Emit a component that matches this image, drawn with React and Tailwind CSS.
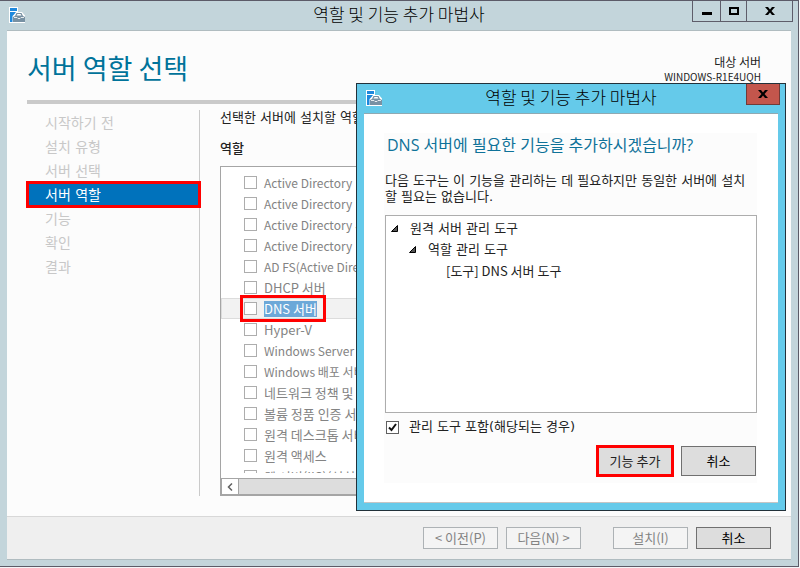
import clsx from 'clsx';

const steps = ['시작하기 전', '설치 유형', '서버 선택', '서버 역할', '기능', '확인', '결과'];

const roles = [
  { name: 'Active Directory', latin: true },
  { name: 'Active Directory', latin: true },
  { name: 'Active Directory 서비스', latin: true },
  { name: 'Active Directory', latin: true },
  { name: 'AD FS(Active Directory)', latin: true },
  { name: 'DHCP 서버' },
  { name: 'DNS 서버', selected: true },
  { name: 'Hyper-V' },
  { name: 'Windows Server', latin: true },
  { name: 'Windows 배포 서비스', latin: true },
  { name: '네트워크 정책 및 액세스 서비스' },
  { name: '볼륨 정품 인증 서비스' },
  { name: '원격 데스크톱 서비스' },
  { name: '원격 액세스' },
  { name: '웹 서버(IIS)(설치됨)' },
];

function ServerIcon() {
  return (
    <svg width="17" height="17" viewBox="0 0 17 17" aria-hidden="true">
      <path d="M0 0h9v5h4l3 3.500V16H0z" fill="#fff" />
      <path d="M1 1h7v3H1zM1 5h6L5 7.500 3.500 9v6H1z" fill="#1e88dc" />
      <path d="M4 15V10l2-1 1.500-3h5L14 9l2 1v5z" fill="#7891a3" />
      <path d="M7.500 8.500 8.500 7h3l1 1.500z" fill="#fff" />
      <path d="M5 10.500h3l1 1h2l1-1h3" fill="none" stroke="#fff" strokeWidth="0.800" />
    </svg>
  );
}

function CloseGlyph() {
  return (
    <svg width="10" height="8" viewBox="0 0 10 8" aria-hidden="true">
      <path d="M0 0h3l2 2.500L7 0h3L6.500 4 10 8H7L5 5.500 3 8H0l3.500-4z" fill="#000" />
    </svg>
  );
}

function Button({ children, disabled, className }) {
  return (
    <button
      type="button"
      disabled={disabled}
      className={clsx(
        'flex w-[75px] items-center justify-center border text-[13px] leading-4 whitespace-nowrap',
        disabled ? 'border-[#adb2b5] bg-[#f4f4f4] text-[#838383]' : 'border-[#707070] bg-[#ddd] text-black',
        className,
      )}
    >
      {children}
    </button>
  );
}

function WindowControls() {
  return (
    <div className="absolute top-0 right-[5px] flex h-[21px] divide-x divide-[#5e5d6a] border border-t-0 border-[#5e5d6a]">
      <button type="button" aria-label="최소화" className="flex w-7 items-center justify-center">
        <span className="mt-1 h-[3px] w-[10px] bg-black" />
      </button>
      <button type="button" aria-label="최대화" className="flex w-[26px] items-center justify-center">
        <span className="h-2 w-[10px] border-2 border-black" />
      </button>
      <button type="button" aria-label="닫기" className="flex w-[45px] items-center justify-center">
        <CloseGlyph />
      </button>
    </div>
  );
}

function StepNav() {
  return (
    <nav className="w-[171px] shrink-0 border-r border-[#cacaca] pt-[2px] font-['DejaVu_Sans','Noto_Sans_CJK_KR',sans-serif]">
      <ul className="flex flex-col gap-[3px] pr-px">
        {steps.map((step) => (
          <li key={step}>
            <a
              href="#"
              className={clsx(
                'flex h-[21px] items-center pl-4 text-sm',
                step === '서버 역할'
                  ? 'relative bg-[#0072bc] text-white outline-3 outline-[#f00]'
                  : 'text-[#c8c8c8]',
              )}
            >
              {step}
            </a>
          </li>
        ))}
      </ul>
    </nav>
  );
}

function RoleRow({ name, latin, selected }) {
  return (
    <li
      className={clsx(
        'flex h-[21px] shrink-0 items-center pl-[22px]',
        selected && 'bg-[#f2f2f2] outline -outline-offset-1 outline-[#dcdcdc]',
      )}
    >
      <label
        className={clsx(
          'flex h-[21px] items-center gap-[7px] pr-[6px] pl-px leading-4 whitespace-nowrap text-[#838383]',
          latin ? 'text-xs' : 'text-[13px]',
          selected && 'relative outline-3 outline-[#f00]',
        )}
      >
        <input type="checkbox" disabled className="size-[13px] appearance-none border border-[#adadad] bg-white" />
        <span className={clsx(selected && 'bg-[#6ca8d8] text-white')}>{name}</span>
      </label>
    </li>
  );
}

function RoleList() {
  return (
    <div className="flex min-h-0 flex-1 flex-col border border-[#a5a5a5] bg-white">
      <ul className="mb-[5px] flex min-h-0 flex-1 flex-col overflow-hidden pt-[5px]">
        {roles.map((role, i) => (
          <RoleRow key={i} {...role} />
        ))}
      </ul>
      <div className="flex h-[17px] border border-[#a5a5a5]">
        <button type="button" aria-label="왼쪽으로 스크롤" className="flex w-4 items-center justify-center">
          <svg width="6" height="8" viewBox="0 0 6 8" aria-hidden="true">
            <path d="M5 0.500 1.500 4 5 7.500" fill="none" stroke="#606060" strokeWidth="1.500" />
          </svg>
        </button>
        <div className="flex-1 border-l border-[#a5a5a5] bg-[#ddd]" />
      </div>
    </div>
  );
}

function TreeItem({ label, className, leaf }) {
  return (
    <li className={clsx('flex h-[21px] items-center gap-3 text-[13px]', className)}>
      {!leaf && (
        <svg width="7" height="7" viewBox="0 0 7 7" aria-hidden="true">
          <path d="M6.500 0.500v6h-6z" fill="#555" stroke="#000" />
        </svg>
      )}
      <span className={clsx(!leaf && "font-['DejaVu_Sans','Noto_Sans_CJK_KR',sans-serif]")}>{label}</span>
    </li>
  );
}

function AddFeaturesDialog() {
  return (
    <div
      role="dialog"
      aria-labelledby="dialog-title"
      className="absolute top-[82px] right-[12px] flex w-[430px] flex-col border border-[#22313a] bg-[#65caea] px-[7px] pb-[7px] text-[#222]"
    >
      <div className="relative flex h-[29px] items-center justify-center pb-1">
        <div className="absolute top-[6px] left-[2px]">
          <ServerIcon />
        </div>
        <h2 id="dialog-title" className="text-[17px] font-light text-black">
          역할 및 기능 추가 마법사
        </h2>
        <button
          type="button"
          aria-label="닫기"
          className="absolute top-0 -right-[2px] flex h-[21px] w-[34px] items-center justify-center border border-t-0 border-[#703b38] bg-[#c3564c]"
        >
          <CloseGlyph />
        </button>
      </div>
      <div className="border-y border-t-[#8fa9b2] border-b-[#c5c5c5] bg-white pt-[19px] pr-[21px] pb-[19px] pl-5">
        <div className="bg-[#fcfcfc] pl-px">
          <h3 className="pl-[2px] font-['Open_Sans','Noto_Sans_CJK_KR',sans-serif] text-base leading-6 text-[#0f7299]">
            DNS 서버에 필요한 기능을 추가하시겠습니까?
          </h3>
          <p className="mt-4 font-['DejaVu_Sans','Noto_Sans_CJK_KR',sans-serif] text-[13px] leading-4">
            다음 도구는 이 기능을 관리하는 데 필요하지만 동일한 서버에 설치
            <br />할 필요는 없습니다.
          </p>
          <ul className="mt-[10px] h-[198px] border border-[#adadad] bg-white pt-[2px]">
            <TreeItem label="원격 서버 관리 도구" className="pl-[5px]" />
            <TreeItem label="역할 관리 도구" className="pl-[23px]" />
            <TreeItem label="[도구] DNS 서버 도구" className="pl-[60px]" leaf />
          </ul>
          <label className="mt-[6px] flex items-center gap-[10px] pl-px font-['DejaVu_Sans','Noto_Sans_CJK_KR',sans-serif] text-[13px] leading-4">
            <span className="relative flex size-[13px]">
              <input
                type="checkbox"
                defaultChecked
                className="peer size-[13px] appearance-none border border-[#606060] bg-white"
              />
              <svg
                viewBox="0 0 13 13"
                className="pointer-events-none absolute inset-0 hidden peer-checked:block"
                aria-hidden="true"
              >
                <path d="M3 6.500 5.500 9 10 3" fill="none" stroke="#111" strokeWidth="2" />
              </svg>
            </span>
            관리 도구 포함(해당되는 경우)
          </label>
          <div className="mt-[11px] flex items-center justify-end gap-[10px] pr-px pb-[7px]">
            <button type="button" className="h-[26px] w-[72px] bg-[#ddd] text-[13px] outline-3 outline-[#f00]">
              기능 추가
            </button>
            <Button className="h-[30px]">취소</Button>
          </div>
        </div>
      </div>
    </div>
  );
}

export default function App() {
  return (
    <div className="h-screen bg-[#f4f5f7] pr-px pb-px font-['Noto_Sans_CJK_KR','Open_Sans',sans-serif]">
      <div className="relative flex h-full flex-col border-t border-r border-b border-[#5c5b68] bg-[#c3d5db] px-[7px] pb-[6px]">
        <header className="relative flex h-[29px] shrink-0 items-center justify-center pb-1">
          <div className="absolute top-[6px] left-[2px]">
            <ServerIcon />
          </div>
          <h1 className="text-[17px] font-light text-black">역할 및 기능 추가 마법사</h1>
        </header>
        <WindowControls />
        <main className="flex min-h-0 flex-1 flex-col border-y border-[#b0bcc0] bg-[#fcfcfc]">
          <div className="mr-5 ml-5 flex h-[73px] shrink-0 items-center justify-between border-b-4 border-[#cacaca] pr-[10px]">
            <h2 className="mt-1 text-[27px] leading-8 text-[#00739a]">서버 역할 선택</h2>
            <p className="mt-2 text-right text-[10px] leading-[14px] text-[#222]">
              <span className="text-xs leading-[14px]">대상 서버</span>
              <br />
              WINDOWS-R1E4UQH
            </p>
          </div>
          <div className="flex min-h-0 flex-1 pt-[6px] pr-5 pb-5 pl-[22px]">
            <StepNav />
            <section className="ml-5 flex min-w-0 flex-1 flex-col text-[13px] leading-4 text-[#222]">
              <p className="font-['DejaVu_Sans','Noto_Sans_CJK_KR',sans-serif]">선택한 서버에 설치할 역할을</p>
              <h3 className="mt-[14px] mb-[10px] font-medium">역할</h3>
              <RoleList />
            </section>
          </div>
          <footer className="flex shrink-0 justify-end gap-2 border-t border-[#d8d8d8] bg-[#efefef] py-[10px] pr-5">
            <Button disabled className="h-[22px]">&lt; 이전(P)</Button>
            <Button disabled className="h-[22px]">다음(N) &gt;</Button>
            <Button disabled className="ml-6 h-[22px]">설치(I)</Button>
            <Button className="h-[22px]">취소</Button>
          </footer>
        </main>
        <AddFeaturesDialog />
      </div>
    </div>
  );
}
